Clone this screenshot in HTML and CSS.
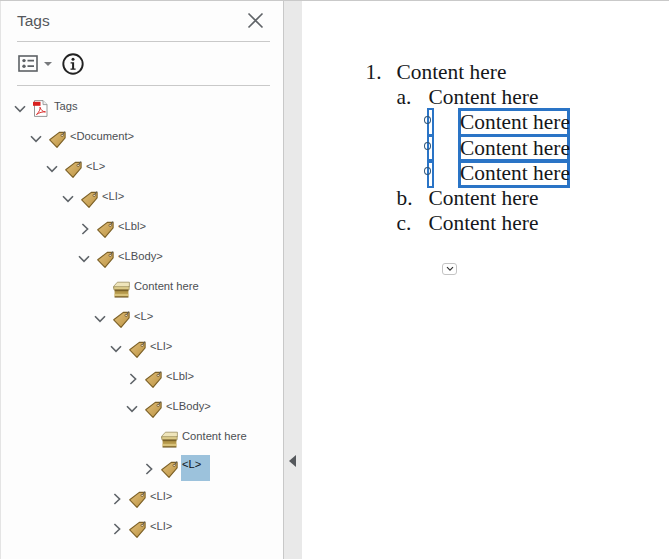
FILE: index.html
```html
<!DOCTYPE html>
<html lang="en">
<head>
<meta charset="utf-8">
<title>Tags</title>
<link rel="stylesheet" href="styles.css">
</head>
<body>
<svg class="defs" width="0" height="0" aria-hidden="true">
  <defs>
    <linearGradient id="tagfill" x1="0" y1="0" x2="1" y2="1">
      <stop offset="0" stop-color="#dfbd78"/>
      <stop offset="1" stop-color="#bd9444"/>
    </linearGradient>
    <symbol id="tag" viewBox="0 0 17 17">
      <path d="M.7 8.8 10.3 1.4h5.8v5.4L8 16.4Z" fill="url(#tagfill)" stroke="#7b5f25" stroke-width="1.1" stroke-linejoin="round"/>
      <circle cx="13.2" cy="4.4" r="1.2" fill="#f3e6c8" stroke="#6d5225" stroke-width=".8"/>
      <path d="M13.6 4 15.8.4" stroke="#5f5f5f" stroke-width="1" fill="none"/>
    </symbol>
    <symbol id="down" viewBox="0 0 14 10">
      <path d="M2 2.2 7 7.4l5-5.2" fill="none" stroke="#5f6469" stroke-width="1.6"/>
    </symbol>
    <symbol id="right" viewBox="0 0 10 14">
      <path d="M2.4 2 7.6 7l-5.2 5" fill="none" stroke="#5f6469" stroke-width="1.6"/>
    </symbol>
    <symbol id="box" viewBox="0 0 17 17">
      <path d="M.6 5.4 4.4 1.2h12v4.6l-3.6 1.4H.6Z" fill="#efe5bb" stroke="#8f8352" stroke-width=".7"/>
      <path d="M.8 5.6h15.4v3H.8Z" fill="#dccb8a" stroke="#8f8352" stroke-width=".6"/>
      <path d="M1.6 8.6h13.8v7.6H1.6Z" fill="#b5984a"/>
      <path d="M1.6 8.6h13.8v1.6H1.6Z" fill="#7a6229"/>
      <path d="M1.6 12.8h13.8v2.2H1.6Z" fill="#d8c27a"/>
      <path d="M1.6 16h13.8" stroke="#5f4920" stroke-width=".9"/>
    </symbol>
  </defs>
</svg>
<div class="app">
  <aside class="panel">
    <header class="panel-head">
      <h1 class="panel-title">Tags</h1>
      <svg class="close" width="17" height="17" viewBox="0 0 17 17"><path d="M1.5 1.5 15.5 15.5M15.5 1.5 1.5 15.5" stroke="#606468" stroke-width="1.6" fill="none"/></svg>
    </header>
    <div class="toolbar">
      <svg class="opt" width="20" height="17" viewBox="0 0 20 17">
        <rect x="1" y="1" width="18" height="15" fill="none" stroke="#5d6165" stroke-width="1.6"/>
        <circle cx="6" cy="5.6" r="1.7" fill="#5d6165"/><circle cx="6" cy="11.2" r="1.7" fill="#5d6165"/>
        <path d="M9.5 5.6H16M9.5 11.2H16" stroke="#5d6165" stroke-width="1.7"/>
      </svg>
      <span class="caret"></span>
      <svg class="info" width="22" height="22" viewBox="0 0 22 22">
        <circle cx="11" cy="11" r="9.7" fill="none" stroke="#222" stroke-width="1.9"/>
        <circle cx="11" cy="6.3" r="1.5" fill="#222"/>
        <path d="M8.6 9.3h3.5v6.3h1.5v1.2H8.5v-1.2h1.6v-5.1H8.6Z" fill="#222"/>
      </svg>
    </div>
    <ul class="tree">
      <li class="row l0"><svg class="tw tw-d"><use href="#down"/></svg>
        <svg class="ico" width="15" height="17" viewBox="0 0 15 17">
          <path d="M1.5.6H10l4 4v11.8H1.5Z" fill="#fff" stroke="#8a8a8a" stroke-width=".9"/>
          <path d="M10 .6v4h4" fill="#eee" stroke="#8a8a8a" stroke-width=".8"/>
          <rect x="0" y="1.8" width="7.5" height="4" fill="#d8201f"/>
          <path d="M3.5 14.5C6 12 7.5 9.3 7 7.2c1 3 2.5 4.4 5.5 4.7-3-.2-6 .5-9 2.6Z" fill="none" stroke="#d8201f" stroke-width=".9"/>
        </svg><span class="lbl">Tags</span></li>
      <li class="row l1"><svg class="tw tw-d"><use href="#down"/></svg><svg class="ico"><use href="#tag"/></svg><span class="lbl">&lt;Document&gt;</span></li>
      <li class="row l2"><svg class="tw tw-d"><use href="#down"/></svg><svg class="ico"><use href="#tag"/></svg><span class="lbl">&lt;L&gt;</span></li>
      <li class="row l3"><svg class="tw tw-d"><use href="#down"/></svg><svg class="ico"><use href="#tag"/></svg><span class="lbl">&lt;LI&gt;</span></li>
      <li class="row l4"><svg class="tw tw-r"><use href="#right"/></svg><svg class="ico"><use href="#tag"/></svg><span class="lbl">&lt;Lbl&gt;</span></li>
      <li class="row l4"><svg class="tw tw-d"><use href="#down"/></svg><svg class="ico"><use href="#tag"/></svg><span class="lbl">&lt;LBody&gt;</span></li>
      <li class="row l5"><span class="tw"></span><svg class="ico"><use href="#box"/></svg><span class="lbl">Content here</span></li>
      <li class="row l5"><svg class="tw tw-d"><use href="#down"/></svg><svg class="ico"><use href="#tag"/></svg><span class="lbl">&lt;L&gt;</span></li>
      <li class="row l6"><svg class="tw tw-d"><use href="#down"/></svg><svg class="ico"><use href="#tag"/></svg><span class="lbl">&lt;LI&gt;</span></li>
      <li class="row l7"><svg class="tw tw-r"><use href="#right"/></svg><svg class="ico"><use href="#tag"/></svg><span class="lbl">&lt;Lbl&gt;</span></li>
      <li class="row l7"><svg class="tw tw-d"><use href="#down"/></svg><svg class="ico"><use href="#tag"/></svg><span class="lbl">&lt;LBody&gt;</span></li>
      <li class="row l8"><span class="tw"></span><svg class="ico"><use href="#box"/></svg><span class="lbl">Content here</span></li>
      <li class="row l8"><svg class="tw tw-r"><use href="#right"/></svg><svg class="ico"><use href="#tag"/></svg><span class="lbl selected">&lt;L&gt;</span></li>
      <li class="row l6"><svg class="tw tw-r"><use href="#right"/></svg><svg class="ico"><use href="#tag"/></svg><span class="lbl">&lt;LI&gt;</span></li>
      <li class="row l6"><svg class="tw tw-r"><use href="#right"/></svg><svg class="ico"><use href="#tag"/></svg><span class="lbl">&lt;LI&gt;</span></li>
    </ul>
  </aside>
  <div class="splitter"><span class="collapse"></span></div>
  <main class="doc">
    <div class="doc-row"><span class="num">1.</span><span>Content here</span></div>
    <div class="doc-row sub"><span class="num">a.</span><span>Content here</span></div>
    <div class="doc-row tagged"><span class="bar"><i class="dot"></i></span><span class="hl">Content here</span></div>
    <div class="doc-row tagged"><span class="bar"><i class="dot"></i></span><span class="hl">Content here</span></div>
    <div class="doc-row tagged"><span class="bar"><i class="dot"></i></span><span class="hl">Content here</span></div>
    <div class="doc-row sub"><span class="num">b.</span><span>Content here</span></div>
    <div class="doc-row sub"><span class="num">c.</span><span>Content here</span></div>
    <button class="more" type="button"><svg width="8" height="6" viewBox="0 0 8 6"><path d="M1 1.2 4 4.2l3-3" fill="none" stroke="#333" stroke-width="1.2"/></svg></button>
  </main>
</div>
</body>
</html>
```
FILE: styles.css
```css
* { box-sizing: border-box; }
html, body { margin: 0; height: 100%; }
body { background: #fff; overflow: hidden; }
.defs { position: absolute; }
.app {
  display: flex;
  height: 559px;
  border-top: 1px solid #c9c9c9;
}
.panel {
  width: 284px;
  flex: none;
  background: #fdfdfd;
  border-right: 1px solid #c8c8c8;
  border-left: 1px solid #e4e4e4;
  padding: 0 13px 0 16px;
  font-family: "Liberation Sans", Arial, sans-serif;
  color: #4c4f53;
}
.panel-head {
  height: 41px;
  display: flex;
  align-items: center;
  justify-content: space-between;
  padding-right: 6px;
  border-bottom: 1px solid #c9c9c9;
}
.panel-title {
  margin: 0;
  font-size: 15.5px;
  font-weight: 400;
  color: #55585c;
}
.close { margin-top: -2px; }
.toolbar {
  height: 44px;
  display: flex;
  align-items: center;
  border-bottom: 1px solid #c9c9c9;
}
.opt { margin-left: 1px; }
.caret {
  width: 0;
  height: 0;
  margin-left: 6px;
  border-left: 4px solid transparent;
  border-right: 4px solid transparent;
  border-top: 4px solid #77797c;
}
.info { margin-left: 10px; }
.tree {
  list-style: none;
  margin: 0;
  padding: 5px 0 0;
}
.row {
  height: 30px;
  display: flex;
  align-items: center;
  margin-left: -4px;
  font-size: 11.2px;
}
.l1 { padding-left: 16px; }
.l2 { padding-left: 32px; }
.l3 { padding-left: 48px; }
.l4 { padding-left: 64px; }
.l5 { padding-left: 80px; }
.l6 { padding-left: 96px; }
.l7 { padding-left: 112px; }
.l8 { padding-left: 128px; }
.tw { flex: none; width: 14px; height: 10px; margin-top: 6px; }
.tw-r { width: 10px; height: 14px; margin-left: 3px; margin-right: 1px; }
.ico { flex: none; width: 17px; height: 17px; margin-left: 6px; margin-top: 7px; }
.l0 .ico { width: 15px; margin-left: 6px; margin-top: 5px; }
.lbl { margin-left: 4px; white-space: nowrap; }
.l0 .lbl { margin-left: 6px; }
.lbl.selected {
  margin-left: 3px;
  align-self: flex-start;
  margin-top: 4px;
  width: 29px;
  height: 26px;
  padding: 3px 0 0 1px;
  background: #9cc2dc;
  color: #10131a;
}
.splitter {
  width: 18px;
  flex: none;
  background: #e9e9e9;
  display: flex;
  justify-content: center;
  padding-top: 454px;
}
.collapse {
  width: 0;
  height: 0;
  margin-left: -2px;
  border-top: 6px solid transparent;
  border-bottom: 6px solid transparent;
  border-right: 7px solid #55585c;
}
.doc {
  flex: 1;
  padding: 59px 0 0 63.5px;
  font-family: "Liberation Serif", "Times New Roman", serif;
  font-size: 21.4px;
  line-height: 25.2px;
  color: #15171a;
  position: relative;
}
.doc-row { display: flex; height: 25.2px; }
.num { width: 31px; flex: none; }
.sub { padding-left: 31px; }
.sub .num { width: 32px; }
.tagged { padding-left: 61.5px; }
.bar {
  position: relative;
  width: 7px;
  height: 29px;
  margin-top: -2px;
  flex: none;
  border: 2.6px solid #2a74c6;
}
.dot {
  position: absolute;
  left: -5px;
  top: 6px;
  width: 7px;
  height: 8px;
  border: 1.5px solid #2f5578;
  border-radius: 50%;
}
.hl {
  margin-left: 24px;
  width: 111.5px;
  height: 29px;
  margin-top: -2px;
  border: 3px solid #2a74c6;
  text-indent: -1px;
  white-space: nowrap;
  line-height: 23.6px;
}
.more {
  display: block;
  margin: 27px 0 0 76.5px;
  padding: 0;
  width: 15px;
  height: 12px;
  border: 1px solid #c4c4c4;
  border-radius: 3px;
  background: #fff;
  line-height: 0;
}
```
